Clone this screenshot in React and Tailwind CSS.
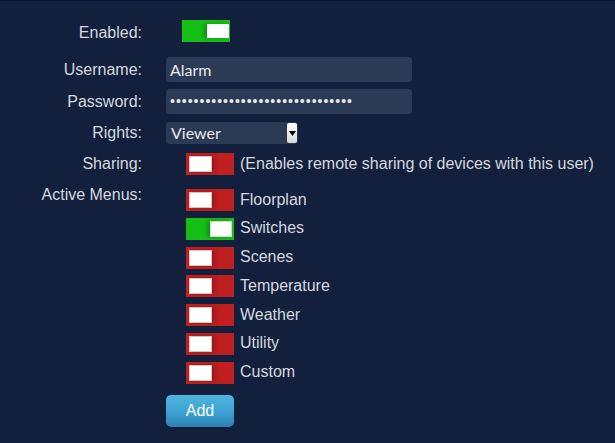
import React from "react";

const MENUS = [
  { name: "Floorplan", on: false },
  { name: "Switches", on: true },
  { name: "Scenes", on: false },
  { name: "Temperature", on: false },
  { name: "Weather", on: false },
  { name: "Utility", on: false },
  { name: "Custom", on: false },
];

function Toggle({ on }) {
  return (
    <div
      className={
        "relative w-[48px] h-[22px] shrink-0 " +
        (on ? "bg-[#16bf16]" : "bg-[#bf1f1f]")
      }
    >
      {on ? (
        <div className="absolute right-[2px] top-[3px] w-[22px] h-[16px] bg-white border border-[#d8d8d8] shadow-[-3px_0_4px_rgba(0,0,0,0.25)]" />
      ) : (
        <div className="absolute left-[3px] top-[3px] w-[23px] h-[16px] bg-white border border-[#c9c9c9] shadow-[3px_0_4px_rgba(0,0,0,0.2)]" />
      )}
    </div>
  );
}

function Label({ children, className = "" }) {
  return (
    <div className={"w-[142px] shrink-0 text-right text-[16px] leading-[18px] text-[#d5d8dd] " + className}>
      {children}
    </div>
  );
}

export default function App() {
  return (
    <div
      className="w-[615px] h-[443px] bg-[#12203e] border-t border-[#0a1530] pt-[19px] overflow-hidden"
      style={{ fontFamily: '"Liberation Sans", Arial, sans-serif' }}
    >
      {/* Enabled */}
      <div className="flex items-center h-[22px]">
        <Label className="pt-[4px]">Enabled:</Label>
        <div className="ml-[40px]">
          <div className="relative w-[48px] h-[22px] bg-[#16bf16]">
            <div className="absolute right-[1px] top-[4px] w-[22px] h-[14px] bg-white shadow-[-3px_0_4px_rgba(0,0,0,0.25)]" />
          </div>
        </div>
      </div>

      {/* Username */}
      <div className="flex items-center h-[25px] mt-[15px]">
        <Label>Username:</Label>
        <div
          className="ml-[24px] w-[246px] h-[25px] rounded-[4px] bg-[#2b3b56] pl-[4px] flex items-center text-[16px] text-[#e8e8ea]"
          style={{ fontFamily: "Lato, sans-serif" }}
        >
          Alarm
        </div>
      </div>

      {/* Password */}
      <div className="flex items-center h-[25px] mt-[7px]">
        <Label>Password:</Label>
        <div className="ml-[24px] w-[246px] h-[25px] rounded-[4px] bg-[#2b3b56] pl-[4px] flex items-center text-[14px] tracking-[1px] text-[#e8e8ea]">
          •••••••••••••••••••••••••••••••
        </div>
      </div>

      {/* Rights */}
      <div className="flex items-center h-[22px] mt-[8px]">
        <Label>Rights:</Label>
        <div className="ml-[24px] w-[132px] h-[22px] rounded-[4px] bg-[#2b3b56] flex items-center justify-between text-[16px] text-[#e8e8ea] overflow-hidden">
          <span className="pl-[5px] -mt-[1px]" style={{ fontFamily: "Lato, sans-serif" }}>
            Viewer
          </span>
          <div className="w-[10px] h-[20px] mr-[1px] bg-gradient-to-b from-[#ffffff] to-[#d9d9d9] rounded-[2px] flex items-center justify-center">
            <svg width="7" height="5" viewBox="0 0 7 5">
              <path d="M0 0 L7 0 L3.5 5 Z" fill="#000" />
            </svg>
          </div>
        </div>
      </div>

      {/* Sharing */}
      <div className="flex items-center h-[22px] mt-[9px]">
        <Label>Sharing:</Label>
        <div className="ml-[44px] flex items-center">
          <Toggle on={false} />
          <span className="ml-[6px] text-[16px] text-[#d5d8dd] whitespace-nowrap">
            (Enables remote sharing of devices with this user)
          </span>
        </div>
      </div>

      {/* Active menus */}
      <div className="flex items-start mt-[11px]">
        <Label>Active Menus:</Label>
        <div className="ml-[44px] pt-[3px] flex flex-col gap-[6.8px]">
          {MENUS.map((m) => (
            <div key={m.name} className="flex items-center h-[22px]">
              <Toggle on={m.on} />
              <span className="ml-[6px] -mt-[1px] text-[16px] text-[#d5d8dd]">{m.name}</span>
            </div>
          ))}
        </div>
      </div>

      {/* Add */}
      <div className="ml-[166px] mt-[11px]">
        <button className="w-[68px] h-[32px] rounded-[5px] bg-gradient-to-b from-[#4db5de] via-[#3ea4d2] to-[#2a80b6] text-white text-[16px] shadow-[0_1px_1px_rgba(0,0,0,0.3)]">
          Add
        </button>
      </div>
    </div>
  );
}
